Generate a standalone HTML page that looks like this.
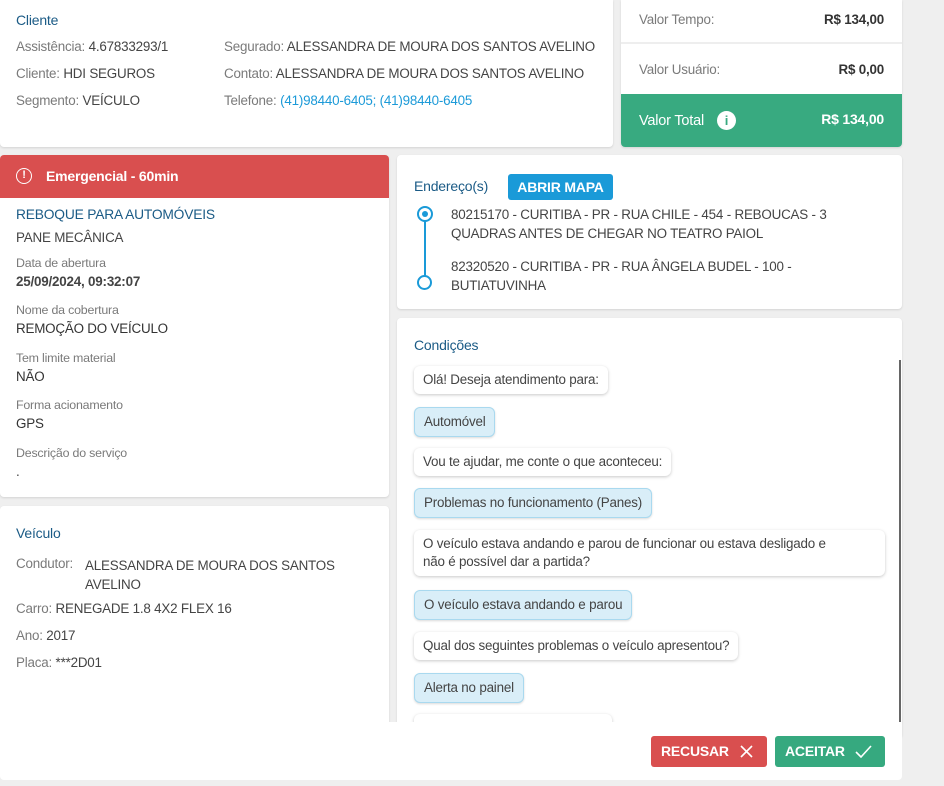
<!DOCTYPE html>
<html><head><meta charset="utf-8"><style>
*{margin:0;padding:0;box-sizing:border-box}
body{width:944px;height:786px;background:#efefef;font-family:"Liberation Sans",sans-serif;font-size:13.4px;color:#444;position:relative;overflow:hidden;letter-spacing:-0.2px}
.card{position:absolute;background:#fff;border-radius:4px;box-shadow:0 1px 2px rgba(0,0,0,.12)}
.a{position:absolute;white-space:nowrap}
.h{color:#1b5b86;font-size:14px}
.l{color:#7a7a7a}
.lnk{color:#1c9ad8}
.sm{font-size:12.4px;color:#7a7a7a}
.b{font-weight:bold}
.bub{position:absolute;left:17px;background:#fff;border-radius:6px;box-shadow:0 1px 3px rgba(0,0,0,.22);padding:5px 9px;line-height:18px;white-space:nowrap;color:#444}
.bub.s{background:#d9eef8;border:1px solid #a9d9ef;box-shadow:0 1px 2px rgba(0,0,0,.15)}
</style></head><body>

<div class="card" style="left:0;top:0;width:613px;height:147px;border-radius:0 0 4px 4px">
 <div class="a h" style="left:16px;top:12px">Cliente</div>
 <div class="a" style="left:16px;top:39px"><span class="l">Assistência:</span> 4.67833293/1</div>
 <div class="a" style="left:16px;top:66px"><span class="l">Cliente:</span> HDI SEGUROS</div>
 <div class="a" style="left:16px;top:93px"><span class="l">Segmento:</span> VEÍCULO</div>
 <div class="a" style="left:224px;top:39px"><span class="l">Segurado:</span> ALESSANDRA DE MOURA DOS SANTOS AVELINO</div>
 <div class="a" style="left:224px;top:66px"><span class="l">Contato:</span> ALESSANDRA DE MOURA DOS SANTOS AVELINO</div>
 <div class="a" style="left:224px;top:93px"><span class="l">Telefone:</span> <span class="lnk">(41)98440-6405; (41)98440-6405</span></div>
</div>

<div class="card" style="left:621px;top:0;width:281px;height:147px;border-radius:0 0 4px 4px;overflow:hidden">
 <div class="a l" style="left:18px;top:12px">Valor Tempo:</div>
 <div class="a b" style="right:18px;top:12px;color:#333">R$ 134,00</div>
 <div style="position:absolute;left:0;right:0;top:42px;height:2px;background:#eee"></div>
 <div class="a l" style="left:18px;top:62px">Valor Usuário:</div>
 <div class="a b" style="right:18px;top:62px;color:#333">R$ 0,00</div>
 <div style="position:absolute;left:0;right:0;top:94px;height:53px;background:#38aa80">
  <div class="a" style="left:18px;top:19px;color:#fff;font-size:14.5px">Valor Total</div>
  <div class="a" style="left:96px;top:17px;width:19px;height:19px;border-radius:50%;background:#fff;color:#38aa80;font-weight:bold;text-align:center;line-height:19px;font-size:13px">i</div>
  <div class="a b" style="right:18px;top:17px;color:#fff;font-size:14px">R$ 134,00</div>
 </div>
</div>

<div class="card" style="left:0;top:155px;width:389px;height:342px;overflow:hidden">
 <div style="position:absolute;left:0;top:0;width:389px;height:43px;background:#d94f4f">
  <div class="a" style="left:16px;top:13px;width:16px;height:16px;border:1.5px solid #fff;border-radius:50%;color:#fff;font-size:11px;text-align:center;line-height:13px;font-weight:bold">!</div>
  <div class="a b" style="left:46px;top:13px;color:#fff;font-size:14px">Emergencial - 60min</div>
 </div>
 <div class="a h" style="left:16px;top:52px;font-size:13.8px">REBOQUE PARA AUTOMÓVEIS</div>
 <div class="a" style="left:16px;top:75px">PANE MECÂNICA</div>
 <div class="a sm" style="left:16px;top:101px">Data de abertura</div>
 <div class="a b" style="left:16px;top:119px">25/09/2024, 09:32:07</div>
 <div class="a sm" style="left:16px;top:148px">Nome da cobertura</div>
 <div class="a" style="left:16px;top:166px;color:#333">REMOÇÃO DO VEÍCULO</div>
 <div class="a sm" style="left:16px;top:196px">Tem limite material</div>
 <div class="a" style="left:16px;top:214px;color:#333">NÃO</div>
 <div class="a sm" style="left:16px;top:243px">Forma acionamento</div>
 <div class="a" style="left:16px;top:261px;color:#333">GPS</div>
 <div class="a sm" style="left:16px;top:291px">Descrição do serviço</div>
 <div class="a" style="left:16px;top:309px">.</div>
</div>

<div class="card" style="left:0;top:506px;width:389px;height:240px">
 <div class="a h" style="left:16px;top:19px">Veículo</div>
 <div class="a" style="left:16px;top:50px"><span class="l">Condutor:</span></div>
 <div class="a" style="left:85px;top:50px;line-height:19px">ALESSANDRA DE MOURA DOS SANTOS<br>AVELINO</div>
 <div class="a" style="left:16px;top:95px"><span class="l">Carro:</span> RENEGADE 1.8 4X2 FLEX 16</div>
 <div class="a" style="left:16px;top:122px"><span class="l">Ano:</span> 2017</div>
 <div class="a" style="left:16px;top:149px"><span class="l">Placa:</span> ***2D01</div>
</div>

<div class="card" style="left:397px;top:155px;width:505px;height:154px">
 <div class="a h" style="left:17px;top:23px">Endereço(s)</div>
 <div class="a b" style="left:111px;top:19px;width:105px;height:26px;background:#1a9ad8;color:#fff;border-radius:3px;text-align:center;line-height:26px;font-size:14px">ABRIR MAPA</div>
 <div class="a" style="left:20px;top:51px;width:16px;height:16px;border:2px solid #1a9ad8;border-radius:50%"><div style="margin:3px;width:6px;height:6px;border-radius:50%;background:#1a9ad8"></div></div>
 <div class="a" style="left:27px;top:66px;width:2px;height:56px;background:#1a9ad8"></div>
 <div class="a" style="left:20px;top:120px;width:15px;height:15px;border:2px solid #1a9ad8;border-radius:50%;background:#fff"></div>
 <div class="a" style="left:54px;top:50px;line-height:19px">80215170 - CURITIBA - PR - RUA CHILE - 454 - REBOUCAS - 3<br>QUADRAS ANTES DE CHEGAR NO TEATRO PAIOL</div>
 <div class="a" style="left:54px;top:102px;line-height:19px">82320520 - CURITIBA - PR - RUA ÂNGELA BUDEL - 100 -<br>BUTIATUVINHA</div>
</div>

<div class="card" style="left:397px;top:318px;width:505px;height:420px;overflow:hidden">
 <div class="a h" style="left:17px;top:19px">Condições</div>
 <div style="position:absolute;left:502px;top:42px;width:2px;height:362px;background:#666"></div>
 <div class="bub" style="top:48px">Olá! Deseja atendimento para:</div>
 <div class="bub s" style="top:89px">Automóvel</div>
 <div class="bub" style="top:130px">Vou te ajudar, me conte o que aconteceu:</div>
 <div class="bub s" style="top:170px">Problemas no funcionamento (Panes)</div>
 <div class="bub" style="top:212px;width:471px">O veículo estava andando e parou de funcionar ou estava desligado e<br>não é possível dar a partida?</div>
 <div class="bub s" style="top:272px">O veículo estava andando e parou</div>
 <div class="bub" style="top:314px">Qual dos seguintes problemas o veículo apresentou?</div>
 <div class="bub s" style="top:355px">Alerta no painel</div>
 <div class="bub" style="top:396px">Problemas de motor no veículo</div>
</div>

<div style="position:absolute;left:0;top:722px;width:902px;height:58px;background:#fff;border-radius:0 0 4px 4px">
 <div class="a b" style="left:651px;top:14px;width:116px;height:31px;background:#d94f4f;border-radius:3px;color:#fff;line-height:31px;padding-left:10px;font-size:14px">RECUSAR
  <svg style="position:absolute;left:89px;top:9px" width="13" height="13" viewBox="0 0 13 13"><path d="M1 1L12 12M12 1L1 12" stroke="#fff" stroke-width="1.6"/></svg></div>
 <div class="a b" style="left:775px;top:14px;width:110px;height:31px;background:#36a97f;border-radius:3px;color:#fff;line-height:31px;padding-left:10px;font-size:14px">ACEITAR
  <svg style="position:absolute;left:80px;top:9px" width="17" height="13" viewBox="0 0 17 13"><path d="M1 7L6 12L16 1" fill="none" stroke="#fff" stroke-width="1.6"/></svg></div>
</div>
</body></html>
